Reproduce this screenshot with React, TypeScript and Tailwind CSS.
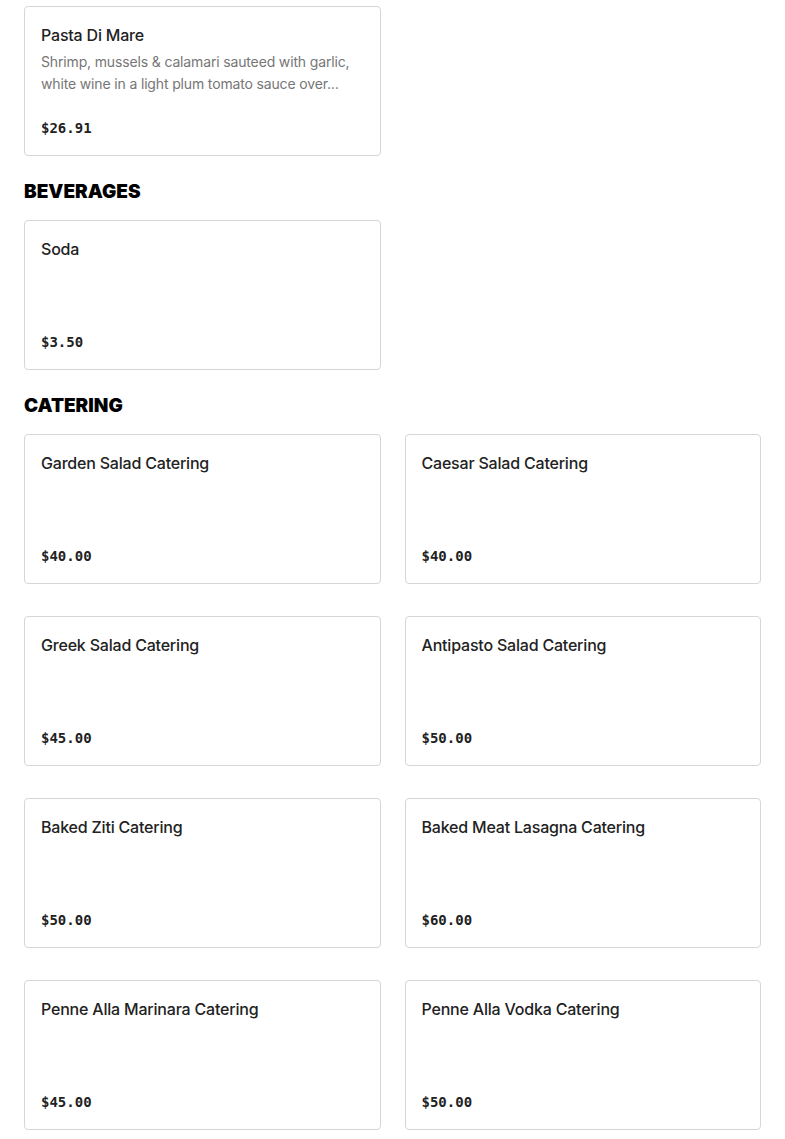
import React from 'react';

type Item = { name: string; desc?: string[]; price: string };

const sections: { title?: string; items: Item[] }[] = [
  {
    items: [
      {
        name: 'Pasta Di Mare',
        desc: [
          'Shrimp, mussels & calamari sauteed with garlic,',
          'white wine in a light plum tomato sauce over...',
        ],
        price: '$26.91',
      },
    ],
  },
  { title: 'BEVERAGES', items: [{ name: 'Soda', price: '$3.50' }] },
  {
    title: 'CATERING',
    items: [
      { name: 'Garden Salad Catering', price: '$40.00' },
      { name: 'Caesar Salad Catering', price: '$40.00' },
      { name: 'Greek Salad Catering', price: '$45.00' },
      { name: 'Antipasto Salad Catering', price: '$50.00' },
      { name: 'Baked Ziti Catering', price: '$50.00' },
      { name: 'Baked Meat Lasagna Catering', price: '$60.00' },
      { name: 'Penne Alla Marinara Catering', price: '$45.00' },
      { name: 'Penne Alla Vodka Catering', price: '$50.00' },
    ],
  },
];

const Card: React.FC<{ item: Item }> = ({ item }) => (
  <div className="flex h-[150px] flex-col rounded-[4px] border border-[#d6d6d6] bg-white p-4">
    <div className="text-base leading-6 font-medium tracking-[-0.2px] text-[#222]">{item.name}</div>
    {item.desc && (
      <p className="mt-1 text-sm leading-[22px] tracking-[-0.15px] text-[#767676]">
        {item.desc.map((l) => (
          <span key={l} className="block whitespace-nowrap">
            {l}
          </span>
        ))}
      </p>
    )}
    <div className="mt-auto mb-px font-['DejaVu_Sans_Mono',monospace] text-sm leading-5 font-bold text-[#222]">
      {item.price}
    </div>
  </div>
);

export default function App() {
  return (
    <div className="min-h-screen bg-white px-6 pt-[6px] pb-10 font-['Inter',sans-serif]">
      {sections.map((s, i) => (
        <section key={i}>
          {s.title && (
            <h2 className="mt-6 mb-4 text-[19px] leading-6 font-black text-black">{s.title}</h2>
          )}
          <div className="grid grid-cols-2 gap-x-6 gap-y-8">
            {s.items.map((it) => (
              <Card key={it.name} item={it} />
            ))}
          </div>
        </section>
      ))}
    </div>
  );
}
